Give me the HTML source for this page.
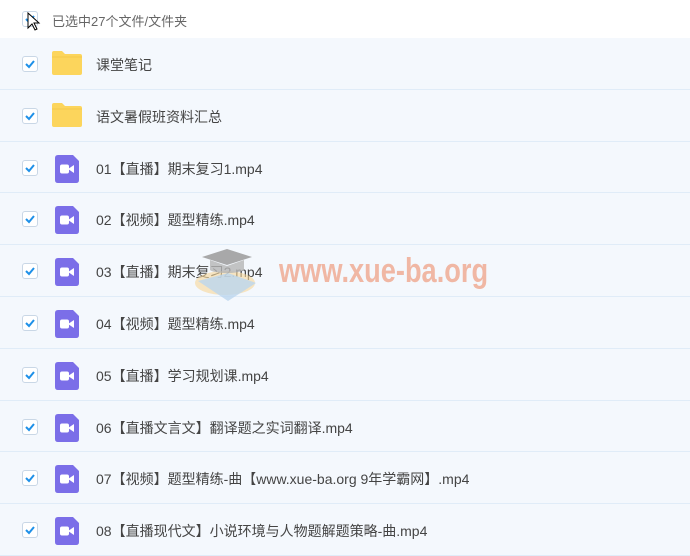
<!DOCTYPE html>
<html><head><meta charset="utf-8"><style>
*{margin:0;padding:0;box-sizing:border-box}
body{width:690px;height:553px;overflow:hidden;background:#fff;font-family:"Liberation Sans","Noto Sans CJK SC",sans-serif;position:relative}
.hdr{height:38px;position:relative;background:#fff;font-size:13px;color:#666}
.hdr span{position:absolute;left:52px;top:11px}
.row{height:51.8px;position:relative;background:#f4f8fd;border-bottom:1px solid #e0ecf8}
.cb{position:absolute;left:22px;top:18px;width:16px;height:16px;border:1px solid #c9d7e6;border-radius:3px;background:#fff}
.cb svg{position:absolute;left:1px;top:1px}
.t{position:absolute;left:96px;top:17px;font-size:14px;color:#444}
.ic{position:absolute;left:55px;top:13px}
.fd{position:absolute;left:52px;top:13px}
.wm{position:absolute;left:279px;top:252px;font:bold 34px "Liberation Sans",sans-serif;color:#f0b7a4;transform:scaleX(0.8);transform-origin:left}
</style></head><body>
<div class="hdr"><div class="cb" style="top:11px"><svg width="12" height="12" viewBox="0 0 12 12"><path d="M2 6l3 3 5-6" stroke="#1e90e8" stroke-width="2" fill="none"/></svg></div>
<svg style="position:absolute;left:27px;top:12px" width="14" height="20" viewBox="0 0 14 20"><path d="M1 1v15l4-4 3 6 2-1-3-6h5z" fill="#fff" stroke="#000" stroke-width="1"/></svg>
<span>已选中27个文件/文件夹</span></div>
<div id="rows"></div>
<svg style="position:absolute;left:190px;top:243px" width="75" height="65" viewBox="0 0 75 65"><ellipse cx="35" cy="40" rx="30" ry="12" fill="#f6d79a" opacity=".6"/><path d="M8 38l30 20 28-18-28-10z" fill="#bcd6ee" opacity=".8"/><path d="M12 14l25-8 25 8-25 8z" fill="#9a9a9a" opacity=".85"/><path d="M20 17v10c5 4 29 4 34 0v-10l-17 6z" fill="#b5b5b5" opacity=".8"/></svg>
<div class="wm">www.xue-ba.org</div>
<script>
const items=[["f","课堂笔记"],["f","语文暑假班资料汇总"],["v","01【直播】期末复习1.mp4"],["v","02【视频】题型精练.mp4"],["v","03【直播】期末复习2.mp4"],["v","04【视频】题型精练.mp4"],["v","05【直播】学习规划课.mp4"],["v","06【直播文言文】翻译题之实词翻译.mp4"],["v","07【视频】题型精练-曲【www.xue-ba.org 9年学霸网】.mp4"],["v","08【直播现代文】小说环境与人物题解题策略-曲.mp4"]];
let h="";
for(const [k,t] of items){
h+='<div class="row"><div class="cb"><svg width="12" height="12" viewBox="0 0 12 12"><path d="M2 6l3 3 5-6" stroke="#1e90e8" stroke-width="2" fill="none"/></svg></div>';
if(k=="f")h+='<svg class="fd" width="30" height="24" viewBox="0 0 30 24"><path d="M0 2q0-2 2-2h8l3 3h15q2 0 2 2v17q0 2-2 2H2q-2 0-2-2z" fill="#fcd55c"/><path d="M0 6h30" stroke="#f3c94a" stroke-width="1"/></svg>';
else h+='<svg class="ic" width="24" height="28" viewBox="0 0 24 28"><path d="M0 3q0-3 3-3h15l6 6v19q0 3-3 3H3q-3 0-3-3z" fill="#7b6ee8"/><rect x="5" y="9.5" width="9" height="9" rx="2" fill="#fff"/><path d="M13 14l6-4v8z" fill="#fff"/></svg>';
h+='<div class="t">'+t+'</div></div>';}
document.getElementById("rows").innerHTML=h;
</script>
</body></html>
